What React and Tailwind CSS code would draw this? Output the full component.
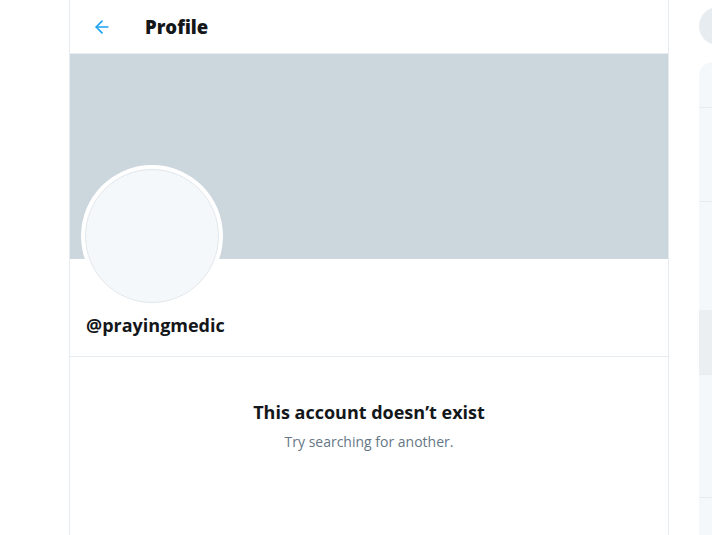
import { ArrowLeft } from 'lucide-react';

export default function App() {
  return (
    <div className="flex h-[535px] w-full overflow-hidden bg-white" style={{ fontFamily: '"Open Sans", "Noto Sans", sans-serif' }}>
      <div className="w-[69px] shrink-0" />

      <main className="w-[600px] shrink-0 border-x border-[#e6ecf0]">
        <header className="flex h-[54px] items-center border-b border-[#e6ecf0] px-[22px] pt-[1px]">
          <ArrowLeft className="h-[20px] w-[20px] text-[#1da1f2]" strokeWidth={2} />
          <h1 className="ml-[33px] text-[18.5px] font-extrabold text-[#14171a]">Profile</h1>
        </header>

        <div className="h-[205px] bg-[#ccd6dd]" />

        <div className="border-b border-[#e6ecf0] px-[11px] pb-[18px]">
          <div className="-mt-[94px] h-[142px] w-[142px] rounded-full bg-white p-[4px]">
            <div className="h-full w-full rounded-full border border-[#e1e8ed] bg-[#f5f8fa]" />
          </div>
          <div className="mt-[5px] pl-[5px] text-[18px] font-bold leading-[26px] text-[#14171a]">@prayingmedic</div>
        </div>

        <div className="flex flex-col items-center pt-[42px]">
          <div className="text-[18px] font-bold leading-[26px] text-[#14171a]">This account doesn’t exist</div>
          <div className="mt-[7px] text-[14px] leading-[20px] text-[#657786]">Try searching for another.</div>
        </div>
      </main>

      <aside className="ml-[30px] w-[350px] shrink-0 pt-[7px]">
        <div className="h-[38px] rounded-full bg-[#e6ecf0]" />
        <div className="mt-[17px] overflow-hidden rounded-t-[14px] bg-[#f5f8fa]">
          <div className="h-[46px] border-b border-[#e6ecf0]" />
          <div className="h-[94px] border-b border-[#e6ecf0]" />
          <div className="h-[108px]" />
          <div className="h-[65px] border-b border-[#e6ecf0] bg-[#ebeff2]" />
          <div className="h-[123px] border-b border-[#e6ecf0]" />
          <div className="h-[60px]" />
        </div>
      </aside>
    </div>
  );
}
